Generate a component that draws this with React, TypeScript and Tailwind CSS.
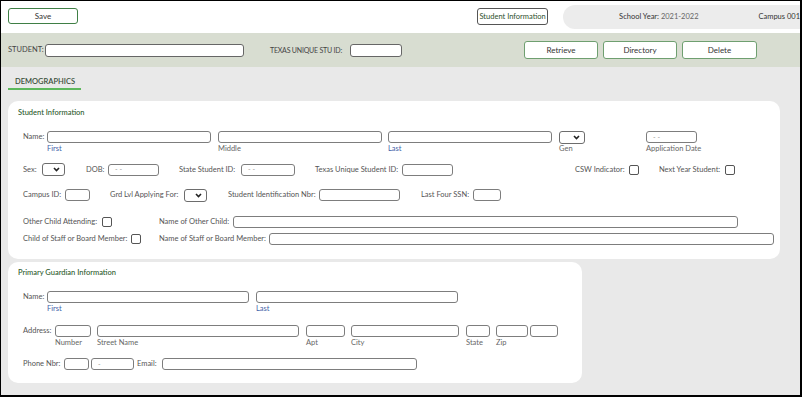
import React from "react";

const lbl = "text-[7.5px] leading-[10px] text-[#555] whitespace-nowrap";
const inp = "h-[12px] border border-[#7d7d7d] rounded-[3px] bg-white shrink-0";

function Box({ w, h = 12, ml = 0, text }: { w: number; h?: number; ml?: number; text?: string }) {
  return (
    <div
      className="h-[12px] border border-[#7d7d7d] rounded-[3px] bg-white shrink-0 flex items-center text-[7px] text-[#999] pl-[6px]"
      style={{ width: w, height: h, marginLeft: ml }}
    >
      {text}
    </div>
  );
}

function Sel({ w, ml = 0 }: { w: number; ml?: number }) {
  return (
    <div
      className="h-[13px] border border-[#6d6d6d] rounded-[3px] bg-white shrink-0 flex items-center justify-end pr-[4px]"
      style={{ width: w, marginLeft: ml }}
    >
      <svg width="7" height="5" viewBox="0 0 7 5">
        <path d="M1 1 L3.5 3.5 L6 1" stroke="#222" strokeWidth="1.6" fill="none" />
      </svg>
    </div>
  );
}

function Chk({ ml = 0 }: { ml?: number }) {
  return (
    <div
      className="w-[10px] h-[10px] border border-[#555] rounded-[2px] bg-white shrink-0"
      style={{ marginLeft: ml }}
    />
  );
}

function Lbl({ w, ml = 0, children, cls = "" }: { w: number; ml?: number; children: React.ReactNode; cls?: string }) {
  return (
    <div className={`${lbl} shrink-0 ${cls}`} style={{ width: w, marginLeft: ml }}>
      {children}
    </div>
  );
}

function Col({ w, ml = 0, sub, blue = false }: { w: number; ml?: number; sub: string; blue?: boolean }) {
  return (
    <div className="flex flex-col shrink-0" style={{ width: w, marginLeft: ml }}>
      <div className={inp} style={{ width: w }} />
      <div className={`text-[7.5px] leading-[10px] mt-[1px] h-[10px] whitespace-nowrap ${blue ? "text-[#3f62a8]" : "text-[#666]"}`}>{sub}</div>
    </div>
  );
}

function GreenBtn({ w, children, ml = 0 }: { w: number; children: React.ReactNode; ml?: number }) {
  return (
    <div
      className="h-[18px] border border-[#6f9f70] rounded-[3px] bg-white flex items-center justify-center text-[8px] text-[#333] shrink-0"
      style={{ width: w, marginLeft: ml }}
    >
      {children}
    </div>
  );
}

export default function App() {
  return (
    <div
      className="w-[802px] h-[397px] border-l border-t border-r-2 border-b-2 border-black bg-[#e9e9e9] overflow-hidden flex flex-col"
      style={{ fontFamily: "Lato, 'Open Sans', sans-serif" }}
    >
      {/* Header */}
      <div className="h-[32px] bg-white flex items-start shrink-0">
        <div className="ml-[7px] mt-[7px] w-[72px] h-[16px] border-[1.5px] border-[#3f7f45] rounded-[3px] flex items-center justify-center text-[8px] text-[#333]">
          Save
        </div>
        <div className="ml-[399px] mt-[7px] w-[73px] h-[17px] border border-[#555] rounded-[3px] flex items-center justify-center text-[7.5px] text-[#2d4f2d] whitespace-nowrap">
          Student Information
        </div>
        <div className="ml-[15px] mt-[4px] flex-1 h-[24px] bg-[#ececec] rounded-l-[12px] flex items-center text-[7.5px] text-[#333] whitespace-nowrap">
          <span className="ml-[56px]">
            School Year: <span className="text-[#666]">2021-2022</span>
          </span>
          <span className="ml-[60px]">Campus 001</span>
        </div>
      </div>

      {/* Green-gray bar */}
      <div className="h-[34px] bg-[#d8ddd1] flex items-center shrink-0">
        <span className="ml-[7px] text-[7.5px] text-[#444] w-[37px] whitespace-nowrap">STUDENT:</span>
        <div className="w-[199px] h-[13px] border border-[#666] rounded-[3px] bg-white shrink-0" />
        <span className="ml-[26px] text-[7px] tracking-[-0.2px] text-[#444] w-[80px] whitespace-nowrap">TEXAS UNIQUE STU ID:</span>
        <div className="w-[52px] h-[13px] border border-[#666] rounded-[3px] bg-white shrink-0" />
        <GreenBtn w={74} ml={122}>Retrieve</GreenBtn>
        <GreenBtn w={74} ml={5}>Directory</GreenBtn>
        <GreenBtn w={75} ml={5}>Delete</GreenBtn>
      </div>

      {/* Tab */}
      <div className="h-[34px] shrink-0 flex flex-col">
        <div className="ml-[14px] mt-[10px] text-[7.5px] leading-[10px] text-[#3a4f3a] font-semibold">DEMOGRAPHICS</div>
        <div className="ml-[7px] mt-[1px] w-[73px] h-[2px] bg-[#5cb85c]" />
      </div>

      {/* Student Information panel */}
      <div className="ml-[7px] w-[772px] bg-white rounded-[10px] flex flex-col pt-[7px] pb-[14px] shrink-0">
        <div className="ml-[10px] text-[7.5px] leading-[10px] text-[#2c5a2c] font-medium">Student Information</div>

        <div className="flex items-start mt-[13px] pl-[15px]">
          <Lbl w={24} cls="mt-[1px]">Name:</Lbl>
          <Col w={164} sub="First" blue />
          <Col w={164} ml={7} sub="Middle" />
          <Col w={164} ml={6} sub="Last" blue />
          <div className="flex flex-col shrink-0 ml-[7px] w-[26px]">
            <Sel w={26} />
            <div className="text-[7.5px] leading-[10px] text-[#666]">Gen</div>
          </div>
          <div className="flex flex-col shrink-0 ml-[61px]">
            <Box w={51} text="- -" />
            <div className="text-[7.5px] leading-[10px] mt-[1px] text-[#666] whitespace-nowrap">Application Date</div>
          </div>
        </div>

        <div className="flex items-center mt-[9px] pl-[15px] h-[13px]">
          <Lbl w={19}>Sex:</Lbl>
          <Sel w={23} />
          <Lbl w={22} ml={21}>DOB:</Lbl>
          <Box w={51} text="- -" />
          <Lbl w={62} ml={20}>State Student ID:</Lbl>
          <Box w={54} text="- -" />
          <Lbl w={87} ml={20}>Texas Unique Student ID:</Lbl>
          <Box w={51} />
          <Lbl w={54} ml={122}>CSW Indicator:</Lbl>
          <Chk />
          <Lbl w={66} ml={20}>Next Year Student:</Lbl>
          <Chk />
        </div>

        <div className="flex items-center mt-[13px] pl-[15px] h-[12px]">
          <Lbl w={42}>Campus ID:</Lbl>
          <Box w={25} />
          <Lbl w={74} ml={20}>Grd Lvl Applying For:</Lbl>
          <Sel w={23} />
          <Lbl w={91} ml={21}>Student Identification Nbr:</Lbl>
          <Box w={81} />
          <Lbl w={52} ml={21}>Last Four SSN:</Lbl>
          <Box w={28} />
        </div>

        <div className="flex items-center mt-[15px] pl-[15px] h-[12px]">
          <Lbl w={79}>Other Child Attending:</Lbl>
          <Chk />
          <Lbl w={74} ml={47}>Name of Other Child:</Lbl>
          <Box w={505} />
        </div>

        <div className="flex items-center mt-[5px] pl-[15px] h-[12px]">
          <Lbl w={108}>Child of Staff or Board Member:</Lbl>
          <Chk />
          <Lbl w={110} ml={18}>Name of Staff or Board Member:</Lbl>
          <Box w={505} />
        </div>
      </div>

      {/* Primary Guardian panel */}
      <div className="ml-[7px] mt-[3px] w-[574px] bg-white rounded-[10px] flex flex-col pt-[6px] pb-[13px] shrink-0">
        <div className="ml-[10px] text-[7.5px] leading-[10px] text-[#2c5a2c] font-medium">Primary Guardian Information</div>

        <div className="flex items-start mt-[13px] pl-[15px]">
          <Lbl w={24} cls="mt-[1px] text-[#6b4a6b]">Name:</Lbl>
          <Col w={202} sub="First" blue />
          <Col w={202} ml={7} sub="Last" blue />
        </div>

        <div className="flex items-start mt-[11px] pl-[15px]">
          <Lbl w={32} cls="mt-[1px]">Address:</Lbl>
          <Col w={36} sub="Number" />
          <Col w={202} ml={6} sub="Street Name" />
          <Col w={39} ml={7} sub="Apt" />
          <Col w={108} ml={6} sub="City" />
          <Col w={24} ml={7} sub="State" />
          <Col w={32} ml={6} sub="Zip" />
          <Col w={28} ml={2} sub="" />
        </div>

        <div className="flex items-center mt-[10px] pl-[15px] h-[12px]">
          <Lbl w={41}>Phone Nbr:</Lbl>
          <Box w={25} />
          <Box w={43} ml={2} text="-" />
          <Lbl w={25} ml={3}>Email:</Lbl>
          <Box w={255} />
        </div>
      </div>
    </div>
  );
}
